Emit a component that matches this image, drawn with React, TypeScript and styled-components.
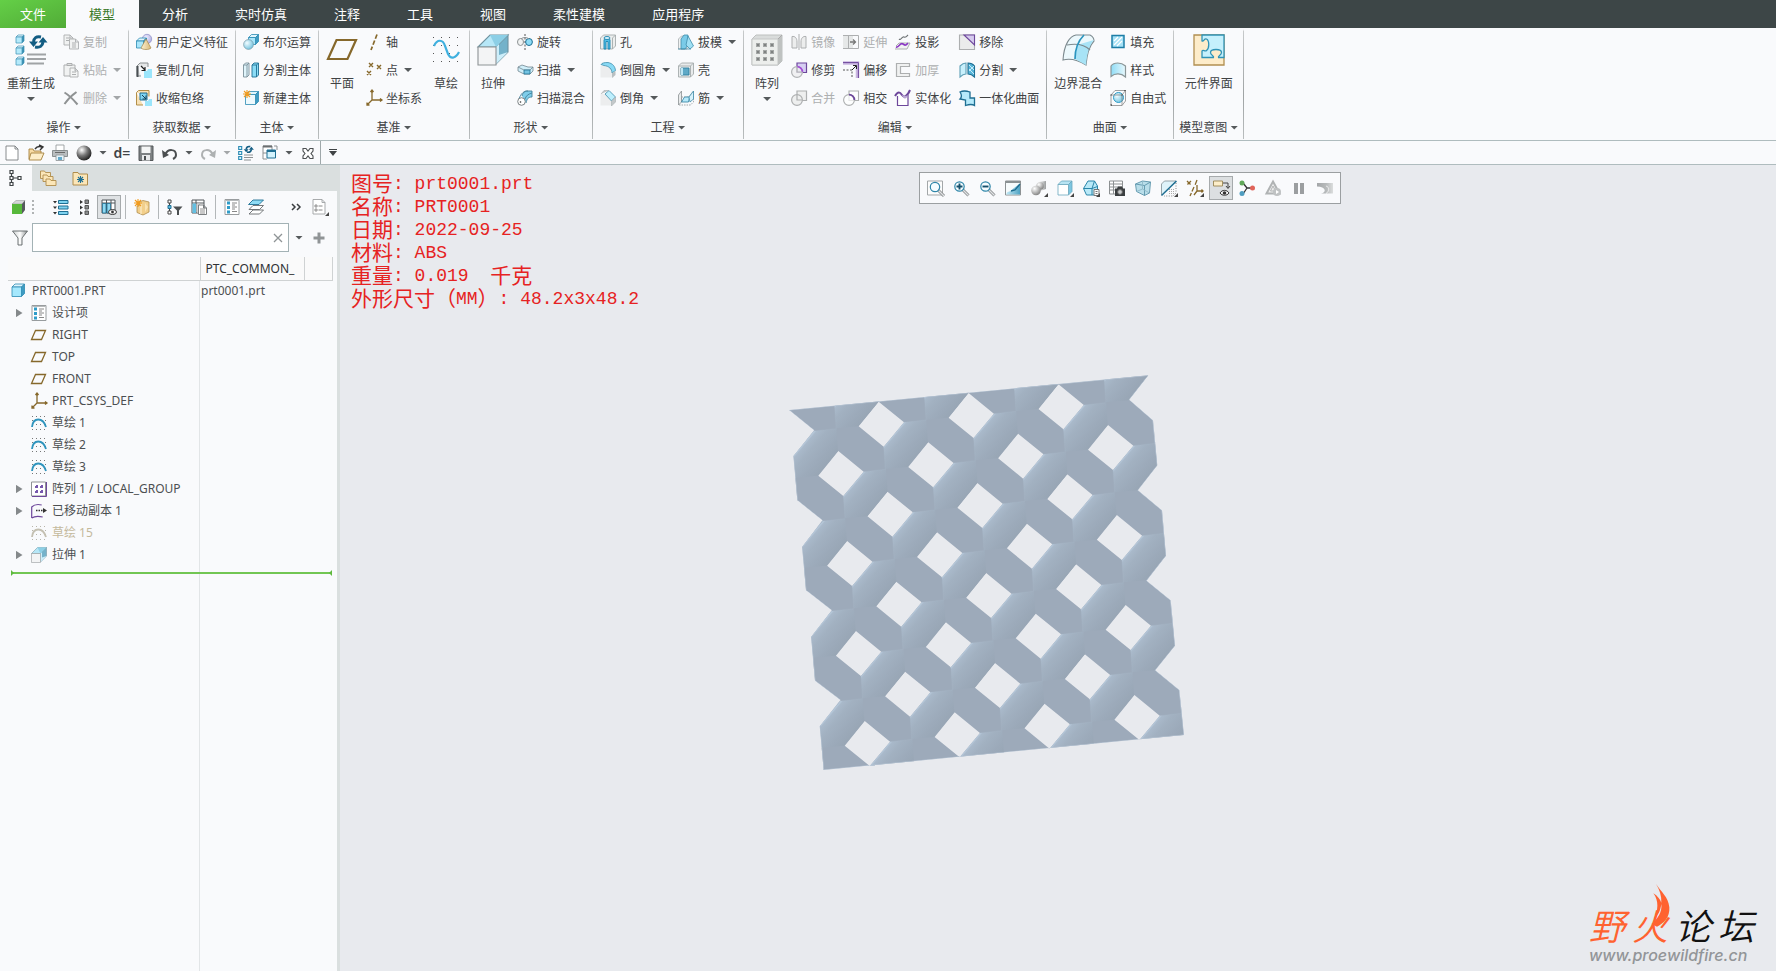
import React from "react";
import styled, { createGlobalStyle, css } from "styled-components";

const ui = `"Noto Sans", "Noto Sans CJK SC", sans-serif`;

const c = {
  bar: "#3d4647",
  surface: "#f9fafc",
  canvas: "#e8eaee",
  line: "#afbcbe",
  text: "#404244",
  off: "#adafb0",
};

const Global = createGlobalStyle`
  *, *::before, *::after { box-sizing: border-box; }
  body { margin: 0; background: ${c.canvas}; color: ${c.text}; font: 12px/16px ${ui}; }
  button, input { font: inherit; color: inherit; }
  button { border: 0; padding: 0; background: none; cursor: pointer; }
  button:disabled { cursor: default; }
`;

/* ---------- icon drawings ---------- */

const B = "#1f6f93";
const G = "#8d9294";
const BR = "#86682b";
const P = "#6d479b";
const MID = "#74c3e2";

const box = (x: number, y: number, w: number, d: number, front = "#a9e6fb", stroke = "#2b8ab3", side = "#3f9cc2", top = "#dff5fd") => (
  <g stroke={stroke} strokeWidth=".8" strokeLinejoin="round">
    <path d={`M${x} ${y + d}l${d} ${-d}h${w}l${-d} ${d}z`} fill={top} />
    <path d={`M${x + w} ${y + d}l${d} ${-d}v${w}l${-d} ${d}z`} fill={side} />
    <path d={`M${x} ${y + d}h${w}v${w}h${-w}z`} fill={front} />
  </g>
);
const sheet = (x: number, y: number, w: number, h: number, s = G, f = "#fff") => (
  <path d={`M${x} ${y}h${w - 3}l3 3v${h - 3}h${-w}zM${x + w - 3} ${y}v3h3`} fill={f} stroke={s} strokeWidth=".9" />
);
const dots = (xs: number[], ys: number[], s: number, f: string) =>
  xs.map((x) => ys.map((y) => <rect key={`${x}-${y}`} x={x} y={y} width={s} height={s} fill={f} />));
const cycle = (f: string) => (
  <g fill="none" stroke={f} strokeWidth="3">
    <path d="M26 3c-5-1-7 1-7.500 5" />
    <path d="M20 13c5 1 7.500-1 8-5" />
    <path d="M14 7.500h9l-4.500 5.500zM23.500 8.500h9L28 3z" fill={f} stroke="none" />
  </g>
);
const star = (x: number, y: number) => (
  <path d={`M${x} ${y - 4}v8M${x - 4} ${y}h8M${x - 3} ${y - 3}l6 6M${x + 3} ${y - 3}l-6 6`} stroke="#f29b1d" strokeWidth="1.1" />
);
const magnifier = (x: number, y: number, inner?: React.ReactNode) => (
  <>
    <path d={`M${x + 3} ${y + 3}l6 6`} stroke="#8b8f91" strokeWidth="3" />
    <path d={`M${x + 3} ${y + 3}l6 6`} stroke="#e1e3e4" strokeWidth="1.2" />
    <circle cx={x} cy={y} r="4.7" fill="#f5fcff" stroke="#2f86a9" strokeWidth="1.2" />
    {inner}
  </>
);
const corner = <path d="M17 13v4h-4z" fill="#444" stroke="none" />;
const sketchArc = (s: string, d: string) => (
  <>
    {dots([1, 5, 9, 13], [1, 14], 1, d)}
    {dots([1, 14], [5, 9], 1, d)}
    {dots([5, 9], [9], 1, d)}
    <path d="M1 12C2 2 12 2 15 12" fill="none" stroke={s} strokeWidth="1.8" />
  </>
);
const miniCubes = (ys: number[]) => ys.map((y) => <g key={y}>{box(1, y, 6, 2, "#b5eafb", "#4b9dbd", "#2b86ab", "#eefaff")}</g>);

const icons: Record<string, React.ReactNode> = {
  copy: <g>{sheet(1, 1, 9, 10, c.off, "#f1f2f2")}{sheet(6.5, 5, 9, 10, c.off, "#f1f2f2")}<path d="M3 4h4M3 6.500h3M9 9h4M9 11h4M9 13h4" stroke={c.off} /></g>,
  paste: <g stroke={c.off}><path d="M1 3h11v11H1z" fill="#f1f2f2" /><path d="M4 3.500V1.500h5v2z" fill="#e2e3e3" />{sheet(7, 6, 8, 9, c.off, "#f4f5f5")}<path d="M9 10h4M9 12.500h4" /></g>,
  del: <path d="M1.500 2.500c5 3 8 6 13 12M13.500 2C9 5 5 9 1.500 14" fill="none" stroke="#8f9293" strokeWidth="2" />,
  udf: <g><circle cx="11" cy="5" r="4.700" fill="url(#violet)" stroke="#8c8cc4" strokeWidth=".7" />{box(0.500, 4, 7, 3)}<path d="M10 5l5 9c-2 2-8 2-10 0z" fill="url(#tan)" stroke="#a5874a" strokeWidth=".7" /></g>,
  copyGeom: <g><path d="M1 4l3-3h8v4M1 4v10h4" fill="#e4e6e7" stroke="#8b9092" /><path d="M.5 4v11h2V4z" fill="#4b5054" /><path d="M5 4l4 4M9 5v3.500H5.500" stroke="#222" fill="none" strokeWidth="1.200" /><path d="M8 9h3l1-2h4v9H8z" fill="#9be5fb" /></g>,
  shrink: <g><path d="M.5 2.500l2-2H13v6M.5 2.500V15H7" fill="#f7e1b6" stroke="#b38e48" /><path d="M4 3h7v7H4z" fill="#7fd5f3" stroke={B} /><path d="M6 5l4 4M10 5.500V9H6.500" stroke="#173f52" fill="none" /><path d="M9 11h3l1-2h3v7H9z" fill="#9be5fb" /></g>,
  bool: <g>{box(5.500, 0.500, 7, 3)}<circle cx="5.500" cy="10.500" r="4.900" fill="url(#sphereBlue)" stroke="#7b9aa6" strokeWidth=".7" /></g>,
  splitBody: <g strokeWidth=".9"><path d="M.5 3l2-2H6v12l-2 2H.5z" fill="#dff4fb" stroke="#7a8f98" /><path d="M.5 3H4v12M4 3l2-2" fill="none" stroke="#7a8f98" /><path d="M9 3l2-2h4.500v12l-2 2H9z" fill="#8bdcf6" stroke={B} /><path d="M9 3h4.500v12M13.500 3l2-2" fill="none" stroke={B} /></g>,
  newBody: <g>{box(2.500, 1.500, 10, 3, "#eef9fd")}{star(4, 4)}</g>,
  axis: <path d="M11 .500L5 16" stroke={BR} strokeWidth="1.700" strokeDasharray="4.500 2" />,
  points: <path d="M3 1l4 4M7 1L3 5M11 3l4 4M15 3l-4 4M1 9l4 4M5 9l-4 4" stroke={BR} strokeWidth="1.400" />,
  csys: <path d="M6 0v10h10M6 10l-5 5M4.500 2L6 0l1.500 2M14 8.500l2 1.500-2 1.500M1 12.500V15h2.500" fill="none" stroke={BR} strokeWidth="1.300" />,
  revolve: <g><path d="M8 0v16" stroke="#555" strokeDasharray="2 1.500" /><ellipse cx="3.500" cy="8" rx="3" ry="3.500" fill="#f0f2f2" stroke={G} /><ellipse cx="12" cy="8" rx="3.400" ry="3.500" fill="#8edcf6" stroke={B} /><path d="M4 5c2-2 6-2 8 0" fill="none" stroke={G} /></g>,
  sweep: <g strokeWidth=".8"><path d="M1 5l4-2 6 2h5v4l-3 3H7L1 9z" fill="#cfeef9" stroke="#738790" /><path d="M1 5l6 3h6l3-3" fill="none" stroke="#738790" /><path d="M7 8h6v4H7z" fill={MID} stroke={B} /></g>,
  blend: <g strokeWidth=".9"><path d="M5 6c1-4 3-5 5-5h5v6c-4 0-5 2-6 6" fill="#7ecdea" stroke="#43819b" /><path d="M2 9c2-6 5-8 9-8M8 9c1-3 3-5 7-6" fill="none" stroke="#43819b" /><circle cx="4.500" cy="11.500" r="3.800" fill="#fff" stroke="#6e7577" /><circle cx="3.500" cy="12" r=".8" fill="#333" /></g>,
  hole: <g strokeWidth=".9"><path d="M.5 4l3-3h12v11l-3 3H.5z" fill="#eceeee" stroke="#a5abad" /><path d="M12.500 4v11M12.500 4l3-3" stroke="#a5abad" /><path d="M4 15V6c0-2 6-2 6 0v9H8V7.500H6V15z" fill="#52bfe8" stroke="#1882ae" /><ellipse cx="7" cy="4" rx="3" ry="1.500" fill="#d8f4fe" stroke="#1882ae" /></g>,
  round: <g><path d="M.5 4h8l5 5v6.500H.5z" fill="#ecedee" /><path d="M1 2.500C2 1 4 .500 8 .500c5 1 7 4 7.500 8L12 11C12 7 9 4 4 3.500z" fill="#89daf5" stroke="#3f8dab" strokeWidth=".8" /><path d="M12 11l3.500-2v4L12 16z" fill="#b9bfc1" /></g>,
  chamfer: <g><path d="M.5 4h5l6 7v4.500H.5z" fill="#ecedee" /><path d="M5 4l4-3.500 6.500 6.500-4 4z" fill="#bdeffd" stroke="#3f8dab" strokeWidth=".8" /><path d="M1 4L4 .500h5M11.500 16v-5l4-4v5z" fill="#c3c8ca" stroke="#a5abad" strokeWidth=".6" /></g>,
  draft: <g strokeWidth=".8"><path d="M.5 5l3-3h5L9 15H.5z" fill="#f0f2f2" stroke="#a5abad" /><path d="M3 5l3-4h4v10l-3 4H3z" fill="#7acbe8" stroke="#3f8dab" /><path d="M10 2l5.500 10L12 15 8 11z" fill="#9fe0f5" stroke="#3f8dab" /><path d="M0 15h13" stroke="#3f8dab" /></g>,
  shell: <g strokeWidth=".9"><path d="M.5 4l3-3h12v11l-3 3H.5z" fill="#e9ebec" stroke="#a5abad" /><path d="M12.500 4v11M.5 4h12l3-3" fill="none" stroke="#a5abad" /><path d="M3 6h8v7H3z" fill="#5fa9c7" stroke="#2f7f9f" /><path d="M3 6h2v7H3z" fill="#bfe7f5" /></g>,
  rib: <g strokeWidth=".8"><path d="M.5 5l3-4v11l-3 3z" fill="#e9ebec" stroke="#8b9193" /><path d="M3.500 12V7h7l5-6v11l-3 3H1" fill="none" stroke="#8b9193" strokeDasharray="1.500 1" /><path d="M3.500 12l3-5h5l-1 5z" fill="#b7eafb" stroke="#2f7f9f" /><path d="M11 7l4.500-6v8L12 12z" fill="#d8f2fb" stroke="#3f8dab" /></g>,
  mirror: <g fill="#eceded" stroke={c.off}><path d="M1 2.500C4 2 6 4 6 8v6H1zM15 2.500c-3-.500-5 1.500-5 5.500v6h5z" /><path d="M8 0v16" /></g>,
  trim: <g strokeWidth="1.200"><path d="M6 1h9.500v9.500H6z" fill="#d6cff2" stroke={P} /><circle cx="6" cy="10" r="5.400" fill="#eeeeef" fillOpacity=".8" stroke="#b0b2b4" /><path d="M6 4.600A5.400 5.400 0 0 1 11.400 10" fill="none" stroke="#a34bd8" strokeWidth="1.700" /><path d="M6 4.600V10h5.400" fill="none" stroke="#b0b2b4" /></g>,
  merge: <g stroke={c.off} strokeWidth="1.200" fill="#eeefef"><path d="M6 1h9.500v9.500H6z" /><circle cx="6" cy="10" r="5.400" /><path d="M6 5v5h5" fill="none" /></g>,
  extend: <g stroke={c.off}><path d="M0 1.500h10v13H0z" fill="#e6e8e8" stroke="none" /><path d="M0 1.500h15.500v13H0M5.500 1.500v13" fill="none" /><path d="M7 8h5M10 5.500L12.500 8 10 10.500" fill="none" stroke="#777" strokeWidth="1.300" /></g>,
  offset: <g><path d="M0 1h14.500v15" fill="none" stroke="#c9b6e0" strokeWidth="3.500" /><path d="M0 .600h15.400V16" fill="none" stroke={P} /><path d="M0 8h9v8" fill="none" stroke="#555" strokeDasharray="2 1.500" /><path d="M9 8l4-4M10 3.500h3.500V7" fill="none" stroke="#222" /></g>,
  intersect: <g strokeWidth="1.100" fill="#fff" fillOpacity=".7"><path d="M6 1h9.500v9.500H6z" stroke={c.off} /><circle cx="6" cy="10" r="5.400" stroke={c.off} /><path d="M6 4.600A5.400 5.400 0 0 1 11.400 10" fill="none" stroke={P} strokeWidth="1.800" /></g>,
  project: <g fill="none"><path d="M4 5c2 2 3-3 5-2s3-1 4-2" stroke="#6d7274" strokeWidth="1.100" /><path d="M1 12l3-3h11l-3 6H0" fill="#f1f2f2" stroke={c.off} /><path d="M1 13c3 1 4-5 7-3s3 1 5-1" stroke="#8a37c4" strokeWidth="1.600" /></g>,
  thicken: <path d="M14.500 1.500H1.500v13h13v-3h-9v-7h9z" fill="#f0f1f1" stroke={c.off} strokeWidth="1.200" />,
  solidify: <g strokeWidth="1.200"><path d="M2.500 6v9.500h10.500V5" fill="#fff" stroke={P} /><path d="M0 6c3-5 5-4 7-1s5 2 8-5" fill="none" stroke={P} strokeWidth="2" /><path d="M3 3c2 0 3 1 5 4s4 1 5-2l-2 1-4-1z" fill="#b9a6d3" /></g>,
  remove: <g strokeWidth="1.100"><path d="M.5 1h15v14.500H.5z" fill="#ebecec" stroke={c.off} /><path d="M5 1h10.500v10z" fill="#d6cbee" stroke={P} /></g>,
  splitSurf: <g strokeWidth="1.100"><path d="M1 4c2-2 3-3 6-3v11c-3 0-4 1-6 3z" fill="#c9f0fc" stroke="#5f9fb6" /><path d="M9 1c3 0 5 1 6.500 3v11c-2-2-4-3-6.500-3z" fill="#57b6da" stroke={B} /><path d="M10 3l5 5M10 7l5 5M15 4l-5 5" stroke="#e5f8ff" strokeWidth=".8" /></g>,
  unify: <path d="M1 2c4-2 7-1 10 0v6h4.500v7.500c-3-2-6-1-9 0V10L1 9c2-2 2-4 0-7z" fill="#b5eafb" stroke={B} strokeWidth="1.300" />,
  fill: <g><path d="M2 1.500h12v12H2z" fill="#a5e1f6" stroke="#1d7ea6" strokeWidth="1.500" /><path d="M4 7l4-4M4 11l8-8M7 12l5-5" stroke="#fff" strokeWidth="1.200" /></g>,
  style: <path d="M1 4c3-4 10-4 14.500 0v11C11 11 5 11 1 14.500z" fill="url(#blueDiag)" stroke="#8b9698" strokeWidth="1.200" />,
  freestyle: <g><circle cx="8.500" cy="7.500" r="5" fill="url(#sphereBlue)" stroke="#2e9cc8" /><path d="M1 5h11v10.500H1zM1 5l4-4.500h10.500V11L12 15.500M12 5l3.500-4.500" fill="none" stroke="#888" strokeWidth=".8" /><path d="M.5 4.500h1v1h-1zM11.500 4.500h1v1h-1zM.5 14.500h1.500v1H.5zM14.500 0h1v1h-1z" fill="#222" /></g>,
  // large ribbon drawings
  regen: <g>{miniCubes([1, 12, 23])}{cycle("#135d83")}<path d="M12 20.500h19M12 25h19M12 29.500h17" stroke="#a0a3a5" strokeWidth="1.800" /></g>,
  plane: <path d="M10.500 6H30L21.500 25H2z" fill="none" stroke={BR} strokeWidth="2.200" />,
  sketchBig: <g>{dots([3, 11, 19, 27], [3, 11, 19, 27], 1, "#555")}<path d="M4 12c3-7 9-7 11 0l3 8c3 6 8 4 11-2" fill="none" stroke="#3fb0df" strokeWidth="2.200" /></g>,
  extrudeBig: <g strokeWidth="1.100"><path d="M1 13L13 1h18L19 13z" fill="#b6e7f7" stroke="#6f93a0" /><path d="M19 13L31 1v17L19 30z" fill="#74b2ca" stroke="#6f93a0" /><path d="M19 30V13l3-3v11l9-3z" fill="#cdeefa" /><path d="M13 1h18L19 13z" fill="#8ccfe6" /><path d="M1 13h18v18H1z" fill="#f3f4f5" stroke="#8e9395" /></g>,
  patternBig: <g><path d="M1 5l4-4h26v26l-4 4H1z" fill="#d9dcdb" stroke="#bdc0bf" /><path d="M1 5h26v26H1z" fill="#eceeec" stroke="#c4c7c6" /><path d="M27 5l4-4v26l-4 4z" fill="#bfc2c1" /><path d="M27 5l4-4" stroke="#aaa" />{dots([5, 12, 19], [9, 16, 23], 4, "#a4a7a6")}{dots([6, 13, 20], [10, 17, 24], 2, "#7f8281")}</g>,
  boundary: <g strokeWidth="1.100"><path d="M1 26C2 10 8 2 14 1h14c2 1 4 3 4 6-5 5-7 12-8 24-8-5-15-7-23-5z" fill="#ecf8fc" stroke="#7d8a8f" /><path d="M15 11l17-5c-5 6-7 13-8 25l-11-6z" fill="#a8e3f6" /><path d="M5 11c10-2 18 0 23 5" fill="none" stroke="#7d8a8f" /><path d="M22 1c-7 7-9 14-9 24" fill="none" stroke="#2a95bf" strokeWidth="1.700" /></g>,
  puzzle: <g strokeWidth="1.300"><path d="M1 1h30v30H1z" fill="#fdecca" stroke="#b18f50" /><path d="M9 1h22v22.500h-5.500c-1-2 3-2 3-5 0-4-11-4-11 0 0 3 4 3 3 5H9V17c1-2 3 1 4.500-.500 3-2 3-10 0-11.500C11 4 11 8 9 7z" fill="#c5f0fc" stroke="#2f93b7" /></g>,
  // quick access
  newFile: <g transform="translate(1 0)">{sheet(1, 1, 12, 14, "#7b8082")}</g>,
  open: <g strokeWidth=".9"><path d="M1 14V4h4l1 2h7v8z" fill="#f7dba3" stroke="#a5823f" /><path d="M3 8h13l-3 7H1z" fill="#fdeec9" stroke="#a5823f" /><path d="M7 4c2-3 4-3 7-2M11 0l4 2-3 3" fill="none" stroke="#333" strokeWidth="1.400" /></g>,
  print: <g strokeWidth=".8"><path d="M4 0h8v6H4z" fill="#fff" stroke={G} /><path d="M.5 5.500h15v6H.5z" fill="#b9bdbf" stroke="#777c7e" /><path d="M3 7.500h10" stroke="#555" /><path d="M4 10h8v5.500H4z" fill="#e5f3f9" stroke={G} /><path d="M6 12h4v3H6z" fill="#63a9ca" /></g>,
  ball: <circle cx="8" cy="8" r="7.500" fill="url(#ball)" />,
  save: <g><path d="M1 1h14v14.500H1z" fill="#7d8183" stroke="#55595b" /><path d="M3.500 1.500h9V8h-9z" fill="#f4f5f5" /><path d="M4 10h8v5.500H4z" fill="#e9ebec" /><path d="M6 11h2v4H6z" fill="#4b4f51" /></g>,
  undo: <g><path d="M3 10c3-7 11-6 11 0 0 2-1 3-3 4" fill="none" stroke="#4b4f51" strokeWidth="2" /><path d="M0 5l1 8 6-3z" fill="#4b4f51" /></g>,
  redo: <g><path d="M13 10C10 3 2 4 2 10c0 2 1 3 3 4" fill="none" stroke="#aeb1b2" strokeWidth="2" /><path d="M16 5l-1 8-6-3z" fill="#aeb1b2" /></g>,
  regenSmall: <g><path d="M.7 1.500h3v3h-3zM.7 6.500h3v3h-3zM.7 11.500h3v3h-3z" fill="#d8f3fc" stroke="#2b8ab3" strokeWidth="1.100" /><g transform="translate(-2 0) scale(.55)">{cycle("#135d83")}</g><path d="M6 10h9M6 12.500h9M6 15h7" stroke="#8c9092" /></g>,
  windows: <g><path d="M1 1h9v7H1zM1 8v6h4" fill="#fff" stroke="#8c9092" /><path d="M1 1.500h9" stroke="#6a6e70" strokeWidth="2" /><path d="M5 5h8.500v8H5z" fill="#d3f2fc" stroke={B} /><path d="M5 6h8.500" stroke={B} strokeWidth="2" /><path d="M12 1h3v4" fill="none" stroke="#8c9092" /></g>,
  closeWin: <path d="M3 3.500h3l2 2.500 2-2.500h3v2.500L11 8.500l2 2.500v2.500h-3L8 11l-2 2.500H3V11l2-2.500L3 6z" fill="#fff" stroke="#4b4f51" strokeWidth="1.100" />,
  // side panel
  modelTree: <path d="M2 .500h3v3H2zM2 6.500h3v3H2zM2 12.500h3v3H2zM10 6.500h3v3h-3zM3.500 3.500v3M3.500 9.500v3M5 8h5" fill="#fff" stroke="#3f4446" strokeWidth="1.200" />,
  folders: <g fill="#fbe6b8" stroke="#b08d4c" strokeWidth=".9"><path d="M.5 1h4l1 1.500h5v6H.5z" /><path d="M3 5h4l1 1.500h5v5H3z" /><path d="M6 9h4l1 1.500h5v5H6z" /></g>,
  favorites: <g><path d="M1 2.500h5L7 4h8.500v11H1z" fill="#fbe6b8" stroke="#b08d4c" /><path d="M8.500 6v7M5 9.500h7M6 7l5 5M11 7l-5 5" stroke={B} strokeWidth="1.100" /></g>,
  greenCube: <g><path d="M2 5l4-3.500h9L12 5z" fill="#d5d7d8" stroke="#9a9d9e" strokeWidth=".6" /><path d="M12 5l3-3.500V11l-3 4z" fill="#555a5c" /><path d="M2 5h10v10H2z" fill="#57b83b" /></g>,
  expand: <g><path d="M5.500 1.500h9.500v3H5.500zM5.500 7h9.500v3H5.500zM5.500 12.500h9.500v3H5.500z" fill="#7ed2ef" stroke={B} /><path d="M0 2h4L2 4.500zM0 7.500h4L2 10zM0 13h4l-2 2.500z" fill="#333" /></g>,
  collapse: <g><path d="M8 1h3.500v3.500H8zM8 6.500h3.500V10H8zM8 12h3.500v3.500H8z" fill="#8a8d8e" stroke="#555" /><path d="M3 1l3 2-3 2zM3 6.500l3 2-3 2zM3 12l3 2-3 2z" fill="#333" /></g>,
  columns: <g><path d="M1 1h13v13H1zM1 4h13M5.500 1v13M10 1v13" fill="#fff" stroke="#51565a" /><path d="M1.500 4.500H5V14H1.500zM6 4.500h3.500V14H6z" fill="#8fd9f2" stroke={B} strokeWidth=".8" /><ellipse cx="11.500" cy="13" rx="4" ry="2.500" fill="#fff" stroke="#333" /><circle cx="11.500" cy="13" r="1.400" fill="#333" /></g>,
  newGroup: <g><path d="M5 3l4-1.500L15 3v10l-6 3-6-2.500V7l3-1z" fill="#f2cf8b" stroke="#b08d4c" strokeWidth=".8" /><path d="M7 5v10" stroke="#fff3d5" /><path d="M11 4l3 4-3 5z" fill="#fae3b3" />{star(4, 4)}</g>,
  treeFilter: <g><path d="M1 1h3v3H1zM1 12h3v3H1zM2.500 4v8" fill="#fff" stroke="#444" /><path d="M1 6.500h3v3H1z" fill="#5cbbe0" stroke={B} /><path d="M6 7.500h9.500l-3.500 4V16h-2v-4.500z" fill="#4b4f51" /></g>,
  treeSheet: <g><path d="M1 1h12v13H1zM1 4h12M5 1v13" fill="#fff" stroke="#51565a" /><path d="M1.500 4.500H5V14H1.500z" fill="#63bfe1" /><path d="M6 4.500h3v9H6z" fill="#d0d3d4" />{sheet(7.500, 6, 8, 9.500, "#6d7274")}<path d="M9 10h5M9 12h5M9 14h5" stroke="#777" strokeWidth=".8" /></g>,
  list: <g><path d="M1 .500h14v15H1z" fill="#fff" stroke="#989c9e" /><path d="M1.500 1.500h13" stroke="#b7babb" />{dots([3], [2.500, 7, 11.500], 3, "#2f9cc8")}<path d="M8 4h5M8 6h3M8 8h5M8 10h3M8 12.500h5" stroke="#888" /></g>,
  layers: <g strokeWidth=".9" strokeLinejoin="round"><path d="M1 15l4-4h10.500l-4 4zM1 10.500l4-4h10.500l-4 4z" fill="#fff" stroke="#666b6d" /><path d="M.5 5.500L5 1h10.500L11 5.500z" fill="#8fdcf5" stroke={B} /></g>,
  more: <path d="M4 5l3 3-3 3M9 5l3 3-3 3" fill="none" stroke="#3b3f41" strokeWidth="1.500" />,
  settings: <g>{sheet(1, 0.500, 12, 14.500, "#9ea2a4")}<path d="M3 6h2v2H3zM3 10h2v2H3z" fill="none" stroke="#777" strokeWidth=".8" /><path d="M6.500 7h4M6.500 11h4" stroke="#888" />{corner}</g>,
  funnel: <path d="M.5 1h15L10 8v7H6V8z" fill="url(#funnelFill)" stroke="#5f6466" strokeWidth=".9" />,
  plus: <path d="M8 2.500v11M2.500 8h11" stroke="#909496" strokeWidth="3" />,
  partCube: <g>{box(1, 1, 9.500, 3, "#a5e8fd")}</g>,
  planeSmall: <path d="M4.500 3.500h10l-4 9H.5z" fill="none" stroke={BR} strokeWidth="1.300" />,
  sketch: sketchArc("#2f94bd", "#777"),
  sketchOff: sketchArc("#c4c0b2", "#b8b5aa"),
  pattern: <g><path d="M.5 1h14v14H.5z" fill="#fff" stroke="#8f9295" /><path d="M15.500 1v14.500H1" stroke={P} fill="none" />{dots([4, 9], [4, 9], 3, "#7658ad")}{dots([4, 9], [4, 9], 1, "#fff")}</g>,
  moved: <g><path d="M.7 15V4c3-3 6-3 10-2M.7 15c3-2 7-2 11-1" fill="none" stroke={P} strokeWidth="1.200" /><path d="M5 7.500h7" stroke="#333" strokeWidth="1.300" strokeDasharray="1.500 1" /><path d="M12 5l4 2.500-4 2.500z" fill="#333" /></g>,
  // view toolbar
  zoomFit: <g><path d="M.5 1h15v14H.5z" fill="#fcfcfc" stroke="#a3a7a9" />{magnifier(8, 7)}</g>,
  zoomIn: magnifier(6.500, 6.500, <path d="M3.500 6.500h6M6.500 3.500v6" stroke="#15506c" strokeWidth="1.900" />),
  zoomOut: magnifier(6.500, 6.500, <path d="M3.500 6.500h6" stroke="#15506c" strokeWidth="1.900" />),
  repaint: <g><path d="M.5 1h15v14H.5z" fill="#f7fbfc" stroke="#8d9294" /><path d="M1 14.500c2-5 3-1 6-5l8-6v11z" fill="url(#blueRow)" /><path d="M6 11l4-1 5-6" stroke="#1b6b8e" strokeWidth="1.300" fill="none" /><path d="M1 2h14" stroke="#8b9193" strokeWidth="2" /></g>,
  shading: <g><path d="M7 2l8-1v8l-6 2z" fill="url(#greyRow)" /><circle cx="9" cy="6" r="3.800" fill="url(#greyBall)" /><circle cx="5" cy="10.500" r="4.800" fill="url(#greyBall)" />{corner}</g>,
  viewBox: <g>{box(1, 1, 10.500, 3.500, "#fff", "#6aa7be", "#7cc6e1", "#b8e4f3")}{corner}</g>,
  namedViews: <g strokeWidth="1"><path d="M.5 8.500L5 1h6.500l3 5v6L11 15H3.500z" fill="#b9e9f8" stroke="#2b86aa" /><path d="M.5 8.500H9l5.500-2M9 8.500L11.500 1M9 8.500V15" fill="none" stroke="#2b86aa" /><path d="M11 9.500h5v6h-5z" fill="#fff" stroke="#777" /><path d="M12.500 11.500h2M12.500 13.500h2" stroke="#777" />{corner}</g>,
  camera: <g><path d="M.5 1h13v13H.5zM.5 4h13M.5 7h13M.5 10h8M4.500 1v13" fill="#fff" stroke="#8c9092" /><path d="M6 8.500h2l1-2h4l1 2h2V16H6z" fill="#3b3f41" /><circle cx="11" cy="12" r="2.400" fill="#c9cccd" stroke="#666" /></g>,
  perspective: <g strokeWidth=".9" stroke="#5b94aa"><path d="M.5 4l7-3 8 1-1 11-5 2.500-8-4z" fill="#b9deea" /><path d="M.5 4l9 1.500v10M9.500 5.500L15.500 2" fill="none" /><path d="M7.500 1v8l-6 2.500M7.500 9l7 4" fill="none" stroke="#8fb9c8" /></g>,
  section: <g><path d="M.5 4l3-3H15L1 15H.5z" fill="#dff3fa" stroke="#8c9a9f" strokeWidth=".9" /><path d="M15 3v10l-3 3H3" fill="none" stroke="#888" strokeDasharray="1 1.500" />{dots([8, 10, 12], [9, 11, 13], 1, "#aaa")}<path d="M.5 15.500L15.500 1" stroke="#1f6f93" strokeWidth="1.500" />{corner}</g>,
  datums: <g stroke={BR} strokeWidth="1.300" fill="none"><path d="M0 1l4 4M4 1L0 5M10 0L8 5M7 7L3 16" strokeDasharray="5 1.500" /><path d="M10 5v6h6M10 11l-3 4M14.500 9.500L16 11l-1.500 1.500" />{corner}</g>,
  annotate: <g><path d="M.5 1h9v5h-9z" fill="#fdeec9" stroke="#9a8653" strokeWidth=".9" /><path d="M10 3h5v5M13 6l2 2.500L17 6" fill="none" stroke="#444" /><path d="M7 13c2-3.500 7-3.500 9 0-2 3-7 3-9 0z" fill="#fff" stroke="#333" /><circle cx="11.500" cy="13" r="1.800" fill="#333" /></g>,
  spin: <g><path d="M4 3l4 5M8 8h6M8 8l-4 6" stroke="#333" strokeWidth="1.300" /><circle cx="3" cy="3" r="2.500" fill="#61a85a" /><circle cx="3" cy="13.500" r="2.500" fill="#4f9dc0" /><circle cx="13.500" cy="8" r="2.500" fill="#e0645a" /></g>,
  simOff: <g><path d="M8 1.500l6.500 12H1.500z" fill="#eee" stroke="#b0b3b4" strokeWidth="2" /><path d="M8 6l2.500 5h-5z" fill="none" stroke="#b0b3b4" /><circle cx="12" cy="12" r="4" fill="#bfc2c3" /><path d="M11 10l3 2-3 2z" fill="#fff" /></g>,
  pause: <path d="M3 3h4v11H3zM9 3h4v11H9z" fill="#9b9ea0" />,
  flow: <g><path d="M0 3h16v10.500H4c6-1 5-7-4-7z" fill="url(#flowFill)" /><path d="M9 6c4 1 3 6 0 7.500" fill="none" stroke="#fff" opacity=".7" /></g>,
};

icons.extrude = <g transform="scale(.5)">{icons.extrudeBig}</g>;

const Svg = styled.svg`
  display: block;
  flex: none;
  overflow: visible;
`;

const Icon = ({ name, size = 16 }: { name: string; size?: number }) => (
  <Svg width={size} height={size} viewBox={`0 0 ${size} ${size}`} aria-hidden="true">
    {icons[name]}
  </Svg>
);

const Gradients = () => (
  <Defs width="0" height="0" aria-hidden="true">
    <defs>
      <radialGradient id="ball" cx=".35" cy=".3" r=".75"><stop offset="0" stopColor="#fff" /><stop offset=".5" stopColor="#777" /><stop offset="1" stopColor="#1c1c1c" /></radialGradient>
      <radialGradient id="greyBall" cx=".35" cy=".3" r=".8"><stop offset="0" stopColor="#fff" /><stop offset="1" stopColor="#777" /></radialGradient>
      <radialGradient id="sphereBlue" cx=".35" cy=".35" r=".75"><stop offset="0" stopColor="#f2fcff" /><stop offset="1" stopColor="#69bfdd" /></radialGradient>
      <radialGradient id="violet" cx=".4" cy=".35" r=".75"><stop offset="0" stopColor="#f0f0ff" /><stop offset="1" stopColor="#a3a3de" /></radialGradient>
      <linearGradient id="tan"><stop offset="0" stopColor="#fdf2d4" /><stop offset="1" stopColor="#d9b877" /></linearGradient>
      <linearGradient id="greyRow"><stop offset="0" stopColor="#fff" /><stop offset="1" stopColor="#9b9e9f" /></linearGradient>
      <linearGradient id="flowFill"><stop offset="0" stopColor="#a3a6a8" /><stop offset=".6" stopColor="#b8bbbc" /><stop offset="1" stopColor="#dcdede" /></linearGradient>
      <linearGradient id="funnelFill" x1="0" y1="0" x2="1" y2="0"><stop offset="0" stopColor="#c9cccd" /><stop offset=".5" stopColor="#fff" /><stop offset="1" stopColor="#8d9192" /></linearGradient>
      <linearGradient id="blueRow"><stop offset="0" stopColor="#c5ebf7" /><stop offset="1" stopColor="#4fa3c4" /></linearGradient>
      <linearGradient id="blueDiag"><stop offset="0" stopColor="#8fdcf6" /><stop offset="1" stopColor="#e8f8fd" /></linearGradient>
    </defs>
  </Defs>
);

const Defs = styled.svg`
  position: absolute;
`;

/* ---------- layout ---------- */

const Page = styled.div`
  display: flex;
  flex-direction: column;
  min-height: 100vh;
`;

const Tabs = styled.nav`
  display: flex;
  height: 28px;
  background: ${c.bar};
  color: #fff;
  font-size: 13px;
`;

const FileTab = styled.button`
  padding: 0 20px 1px;
  background: linear-gradient(160deg, #64cf47, #51ab37);
`;

const Tab = styled.button<{ $on?: boolean }>`
  padding: 0 24px 1px 23px;
  white-space: nowrap;
  ${(p) => p.$on && css`
    background: ${c.surface};
    color: #3c7a2a;
  `}
`;

const Ribbon = styled.div`
  display: flex;
  height: 112px;
  background: ${c.surface};
`;

const Group = styled.section`
  display: grid;
  grid-template-rows: 84px 28px;
  padding: 0 3px;
  border-right: 1px solid;
  border-image: linear-gradient(transparent 2%, #c6c9ca 4%, #9fa3a4 60%, #b9bdbe 98%, transparent 98%) 1;
`;

const GroupBody = styled.div`
  display: flex;
  justify-content: center;
  gap: 8px;
  padding: 0 4px;
`;

const GroupLabel = styled.button`
  display: flex;
  align-items: center;
  justify-content: center;
  padding: 3px 2px 0;
  white-space: nowrap;
`;

const Column = styled.div`
  display: grid;
  grid-template-rows: repeat(3, 28px);
  justify-items: start;
`;

const Tool = styled.button`
  display: flex;
  align-items: center;
  white-space: nowrap;
  &:disabled { color: ${c.off}; }
`;

const ToolText = styled.span`
  margin-left: 4px;
  padding-top: 2px;
`;

const BigTool = styled.button`
  display: flex;
  flex-direction: column;
  align-items: center;
  min-width: 32px;
  padding-top: 6px;
  white-space: nowrap;
`;

const BigText = styled.span`
  margin: 10px 0 5px;
`;

const Caret = styled.i<{ $off?: boolean; $flush?: boolean }>`
  flex: none;
  width: 8px;
  height: 4px;
  margin-left: ${(p) => (p.$flush ? 0 : 6)}px;
  background: ${(p) => (p.$off ? "#a3a6a8" : "#55595b")};
  clip-path: polygon(0 0, 100% 0, 50% 100%);
`;

const LabelCaret = styled(Caret)`
  margin-left: 3px;
`;

const QuickBar = styled.div`
  display: flex;
  align-items: center;
  height: 25px;
  border: solid ${c.line};
  border-width: 1px 0;
  background: ${c.surface};
`;

const QuickButton = styled.button<{ $narrow?: boolean }>`
  display: grid;
  place-items: center;
  width: ${(p) => (p.$narrow ? 14 : 24)}px;
  height: 23px;
`;

const QuickText = styled.span`
  font-size: 14px;
  font-weight: 600;
`;

const QuickEnd = styled.div`
  display: flex;
  align-items: center;
  height: 23px;
  padding-left: 5px;
  border-left: 1px solid #9fa8aa;
`;

const Work = styled.div`
  display: flex;
  flex: 1;
`;

const Side = styled.aside`
  display: flex;
  flex-direction: column;
  width: 340px;
  border-right: 3px solid #dadfdf;
  background: ${c.surface};
`;

const SideTabs = styled.div`
  display: flex;
  height: 26px;
  background: #dadfdf;
`;

const SideTab = styled.button<{ $on?: boolean }>`
  display: grid;
  place-items: center;
  width: 32px;
  background: ${(p) => (p.$on ? c.surface : "none")};
`;

const SideTools = styled.div`
  display: flex;
  align-items: center;
  height: 32px;
  padding: 0 5px 0 6px;
`;

const SideTool = styled.button<{ $on?: boolean }>`
  display: grid;
  place-items: center;
  width: 24px;
  height: 24px;
  ${(p) => p.$on && css`
    border: 1px solid #a6aaac;
    background: #dfe2e4;
  `}
`;

const Grip = styled.i`
  width: 2px;
  height: 14px;
  margin: 0 15px 0 2px;
  background: repeating-linear-gradient(#b0b3b4 0 2px, transparent 2px 4px);
`;

const Rule = styled.i`
  width: 1px;
  height: 24px;
  margin: 0 4px;
  background: #b3b7b9;
`;

const Spacer = styled.span`
  flex: 1;
`;

const SearchRow = styled.form`
  display: flex;
  align-items: center;
  height: 29px;
  padding: 0 8px 0 12px;
`;

const SearchBox = styled.div`
  display: flex;
  flex: 1;
  height: 29px;
  margin-left: 4px;
  border: 1px solid #a3b2b5;
  background: #fff;
`;

const SearchInput = styled.input`
  flex: 1;
  min-width: 0;
  padding: 0 6px;
  border: 0;
  outline: 0;
  background: none;
`;

const SmallButton = styled.button`
  display: grid;
  place-items: center;
  width: 20px;
`;

const TreeArea = styled.div`
  flex: 1;
  margin-top: 5px;
  background: linear-gradient(#e2e5e7, #e2e5e7) 199px 0 / 1px 100% no-repeat;
`;

const Tree = styled.table`
  width: 324px;
  margin-left: 8px;
  border-collapse: collapse;
  table-layout: fixed;
  color: #4c4f51;
`;

const Head = styled.th<{ $w: number }>`
  width: ${(p) => p.$w}px;
  height: 23px;
  padding: 1px 0 0 5px;
  border: solid #cfd2d3;
  border-width: 0 1px 1px 0;
  background: #fafafa;
  color: #303234;
  font-weight: 400;
  text-align: left;
  overflow: hidden;
`;

const Cell = styled.td`
  height: 22px;
  padding: 0 0 0 1px;
  white-space: nowrap;
`;

const Node = styled.div<{ $root?: boolean; $off?: boolean }>`
  display: flex;
  align-items: center;
  gap: 5px;
  padding-left: ${(p) => (p.$root ? 2 : 3)}px;
  color: ${(p) => (p.$off ? "#c4b99c" : "inherit")};
`;

const Toggle = styled.button`
  display: block;
  width: 14px;
  height: 16px;
  &::before {
    content: "";
    display: block;
    width: 7px;
    height: 9px;
    margin: 0 auto;
    background: ${(p) => (p.disabled ? "none" : "#85898b")};
    clip-path: polygon(0 0, 100% 50%, 0 100%);
  }
`;

const Insert = styled.div`
  display: flex;
  align-items: center;
  justify-content: space-between;
  height: 2px;
  margin: 6px 5px 0 11px;
  background: #72c653;
  &::before, &::after {
    content: "";
    width: 3px;
    height: 6px;
    background: #5fb93e;
    clip-path: polygon(0 0, 100% 50%, 0 100%);
  }
  &::after { clip-path: polygon(100% 0, 0 50%, 100% 100%); }
`;

const Canvas = styled.main`
  position: relative;
  flex: 1;
  background: ${c.canvas};
  overflow: hidden;
`;

const Notes = styled.div`
  padding: 8px 11px;
  color: #e62222;
  font: 18px/23px "Liberation Mono", "Noto Sans CJK SC", monospace;
  white-space: pre;
`;

const Note = styled.p`
  display: flex;
  height: 23px;
  margin: 0;
`;

const Han = styled.span`
  font-family: "Noto Sans CJK SC", sans-serif;
  font-size: 21px;
  line-height: 18px;
`;

const ViewTools = styled.div`
  position: absolute;
  top: 7px;
  left: 579px;
  display: flex;
  align-items: center;
  height: 32px;
  padding: 0 2px;
  border: 1px solid #9b9fa1;
  background: ${c.surface};
`;

const ViewTool = styled.button<{ $on?: boolean }>`
  display: grid;
  place-items: center;
  width: 26px;
  height: 24px;
  ${(p) => p.$on && css`
    width: 24px;
    margin: 0 1px;
    border: 1px solid #a6aaac;
    background: #dcdfe1;
  `}
`;

const PartDrawing = styled.svg`
  position: absolute;
  top: 200px;
  left: 440px;
`;

const Logo = styled.div`
  position: absolute;
  right: 22px;
  bottom: 7px;
  display: flex;
  flex-direction: column;
`;

const LogoName = styled.div`
  display: flex;
  gap: 7px;
  font: italic 350 36px/40px "Noto Sans CJK SC", sans-serif;
  color: #111;
`;

const LogoHot = styled.span`
  color: #ff6230;
`;

const Flame = styled.svg`
  position: absolute;
  top: -20px;
  left: 62px;
`;

const LogoUrl = styled.span`
  margin-top: 2px;
  color: #929598;
  font: italic 500 16px/18px Inter, sans-serif;
`;

/* ---------- ribbon data ---------- */

type Item = { icon: string; text: string; menu?: boolean; off?: boolean };
type Big = { big: string; text: string; menu?: boolean };

const t = (icon: string, text: string, flags = ""): Item => ({ icon, text, menu: flags.includes("m"), off: flags.includes("x") });

const groups: { name: string; parts: (Big | Item[])[] }[] = [
  { name: "操作", parts: [{ big: "regen", text: "重新生成", menu: true }, [t("copy", "复制", "x"), t("paste", "粘贴", "xm"), t("del", "删除", "xm")]] },
  { name: "获取数据", parts: [[t("udf", "用户定义特征"), t("copyGeom", "复制几何"), t("shrink", "收缩包络")]] },
  { name: "主体", parts: [[t("bool", "布尔运算"), t("splitBody", "分割主体"), t("newBody", "新建主体")]] },
  { name: "基准", parts: [{ big: "plane", text: "平面" }, [t("axis", "轴"), t("points", "点", "m"), t("csys", "坐标系")], { big: "sketchBig", text: "草绘" }] },
  { name: "形状", parts: [{ big: "extrudeBig", text: "拉伸" }, [t("revolve", "旋转"), t("sweep", "扫描", "m"), t("blend", "扫描混合")]] },
  { name: "工程", parts: [[t("hole", "孔"), t("round", "倒圆角", "m"), t("chamfer", "倒角", "m")], [t("draft", "拔模", "m"), t("shell", "壳"), t("rib", "筋", "m")]] },
  {
    name: "编辑",
    parts: [
      { big: "patternBig", text: "阵列", menu: true },
      [t("mirror", "镜像", "x"), t("trim", "修剪"), t("merge", "合并", "x")],
      [t("extend", "延伸", "x"), t("offset", "偏移"), t("intersect", "相交")],
      [t("project", "投影"), t("thicken", "加厚", "x"), t("solidify", "实体化")],
      [t("remove", "移除"), t("splitSurf", "分割", "m"), t("unify", "一体化曲面")],
    ],
  },
  { name: "曲面", parts: [{ big: "boundary", text: "边界混合" }, [t("fill", "填充"), t("style", "样式"), t("freestyle", "自由式")]] },
  { name: "模型意图", parts: [{ big: "puzzle", text: "元件界面" }] },
];

const tabs = ["模型", "分析", "实时仿真", "注释", "工具", "视图", "柔性建模", "应用程序"];

const quick: [string, string][] = [
  ["newFile", "新建"], ["open", "打开"], ["print", "打印"], ["ball", "外观"], ["|", "外观菜单"], ["d=", "尺寸"], ["save", "保存"],
  ["undo", "撤消"], ["|", "撤消列表"], ["redo", "重做"], ["|off", "重做列表"], ["regenSmall", "重新生成"], ["windows", "窗口"], ["|", "窗口列表"], ["closeWin", "关闭"],
];

const sideTools: [string, string][] = [
  ["greenCube", "模型"], ["grip", ""], ["expand", "全部展开"], ["collapse", "全部折叠"], ["columns", "显示列"], ["rule", "a"], ["newGroup", "新建组"],
  ["rule", "b"], ["treeFilter", "树过滤器"], ["treeSheet", "树列"], ["rule", "c"], ["list", "设计项"], ["layers", "层"], ["space", ""], ["more", "更多"], ["settings", "设置"],
];

const nodes: { icon: string; text: string; value?: string; kids?: boolean; root?: boolean; off?: boolean }[] = [
  { icon: "partCube", text: "PRT0001.PRT", value: "prt0001.prt", root: true },
  { icon: "list", text: "设计项", kids: true },
  { icon: "planeSmall", text: "RIGHT" },
  { icon: "planeSmall", text: "TOP" },
  { icon: "planeSmall", text: "FRONT" },
  { icon: "csys", text: "PRT_CSYS_DEF" },
  { icon: "sketch", text: "草绘 1" },
  { icon: "sketch", text: "草绘 2" },
  { icon: "sketch", text: "草绘 3" },
  { icon: "pattern", text: "阵列 1 / LOCAL_GROUP", kids: true },
  { icon: "moved", text: "已移动副本 1", kids: true },
  { icon: "sketchOff", text: "草绘 15", off: true },
  { icon: "extrude", text: "拉伸 1", kids: true },
];

const viewTools: [string, string][] = [
  ["zoomFit", "重新调整"], ["zoomIn", "放大"], ["zoomOut", "缩小"], ["repaint", "重画"], ["shading", "显示样式"], ["viewBox", "已保存方向"],
  ["namedViews", "视图管理器"], ["camera", "视图图像"], ["perspective", "透视图"], ["section", "截面"], ["datums", "基准显示"], ["annotate", "注释显示"],
  ["spin", "旋转中心"], ["simOff", "仿真"], ["pause", "暂停"], ["flow", "播放"],
];

const notes: [string, string][][] = [
  [["h", "图号"], ["", ": prt0001.prt"]],
  [["h", "名称"], ["", ": PRT0001"]],
  [["h", "日期"], ["", ": 2022-09-25"]],
  [["h", "材料"], ["", ": ABS"]],
  [["h", "重量"], ["", ": 0.019  "], ["h", "千克"]],
  [["h", "外形尺寸（"], ["", "MM"], ["h", "）"], ["", ": 48.2x3x48.2"]],
];

/* ---------- lattice part ---------- */

const outline =
  "M27 135L1105 31 1048 104 1119 166 1132 301 1074 376 1146 436 1158 572 1100 647 1172 706 1185 842 1126 916 1198 975 1212 1110 131 1215 119 1084 181 1005 105 947 93 816 155 736 78 676 66 546 127 466 52 406 40 273 102 196z";

const span = (a: number, b: number) => Array.from({ length: b - a + 1 }, (_, i) => a + i);
const at = (x: number, y: number, i: number, j: number): [number, number] => [x + i * 269.7 + j * 26.4, y - i * 26 + j * 270];
const wide = span(-2, 5).flatMap((i) => span(-1, 4).flatMap((j) => [at(296, 110, i, j), at(175, 258, i, j)]));
const holes = [
  ...span(0, 2).flatMap((i) => span(0, 3).map((j) => at(296, 110, i, j))),
  ...span(0, 3).flatMap((i) => span(0, 3).map((j) => at(175, 258, i, j))),
];
const holePath = holes.map(([x, y]) => `M${x} ${y}l76 62-61 73-75-61z`).join("");

const Lattice = () => (
  <PartDrawing width="410" height="415" viewBox="0 0 1230 1245" role="img" aria-label="PRT0001">
    <defs>
      <linearGradient id="strut" gradientUnits="userSpaceOnUse" x1="45" y1="98" x2="117" y2="159">
        <stop offset="0" stopColor="#bccfe1" />
        <stop offset=".07" stopColor="#a9b9ca" />
        <stop offset=".3" stopColor="#a2b1c1" />
        <stop offset=".7" stopColor="#9caaba" />
        <stop offset="1" stopColor="#98a6b5" />
      </linearGradient>
      <clipPath id="body"><path d={outline + holePath} clipRule="evenodd" /></clipPath>
    </defs>
    <g clipPath="url(#body)">
      <path d={outline} fill="#9daaba" />
      {wide.map(([x, y]) => (
        <g key={`${x}-${y}`} transform={`translate(${x} ${y})`}>
          <path d="M76 62l67-7 5 67-61 74-67 6-5-67z" fill="url(#strut)" />
          <path d="M76 62l67-7M15 135l5 67" stroke="#a9b8c8" strokeWidth="1.500" opacity=".5" />
        </g>
      ))}
      <path d={outline} fill="none" stroke="#b9c7d6" strokeWidth="3" />
    </g>
  </PartDrawing>
);

/* ---------- page ---------- */

export default function App() {
  return (
    <Page lang="zh-CN">
      <Global />
      <Gradients />
      <Tabs>
        <FileTab>文件</FileTab>
        {tabs.map((name, i) => (
          <Tab key={name} $on={i === 0}>{name}</Tab>
        ))}
      </Tabs>
      <Ribbon>
        {groups.map((g) => (
          <Group key={g.name}>
            <GroupBody>
              {g.parts.map((p, i) =>
                Array.isArray(p) ? (
                  <Column key={i}>
                    {p.map((item) => (
                      <Tool key={item.text} disabled={item.off}>
                        <Icon name={item.icon} />
                        <ToolText>{item.text}</ToolText>
                        {item.menu && <Caret $off={item.off} />}
                      </Tool>
                    ))}
                  </Column>
                ) : (
                  <BigTool key={i}>
                    <Icon name={p.big} size={32} />
                    <BigText>{p.text}</BigText>
                    {p.menu && <Caret $flush />}
                  </BigTool>
                )
              )}
            </GroupBody>
            <GroupLabel>
              {g.name}
              <LabelCaret />
            </GroupLabel>
          </Group>
        ))}
      </Ribbon>
      <QuickBar>
        {quick.map(([icon, label]) => (
          <QuickButton key={label} aria-label={label} $narrow={icon[0] === "|"}>
            {icon[0] === "|" ? <Caret $flush $off={icon === "|off"} /> : icon === "d=" ? <QuickText>d=</QuickText> : <Icon name={icon} />}
          </QuickButton>
        ))}
        <QuickEnd>
          <QuickButton $narrow aria-label="自定义">
            <Svg width="8" height="7" viewBox="0 0 8 7"><path d="M0 0h8v1H0zM0 2h8L4 7z" fill="#3f4345" /></Svg>
          </QuickButton>
        </QuickEnd>
      </QuickBar>
      <Work>
        <Side>
          <SideTabs>
            <SideTab $on aria-label="模型树"><Icon name="modelTree" /></SideTab>
            <SideTab aria-label="文件夹浏览器"><Icon name="folders" /></SideTab>
            <SideTab aria-label="收藏夹"><Icon name="favorites" /></SideTab>
          </SideTabs>
          <SideTools>
            {sideTools.map(([icon, label]) =>
              icon === "grip" ? <Grip key={icon} /> :
              icon === "rule" ? <Rule key={label} /> :
              icon === "space" ? <Spacer key={icon} /> : (
                <SideTool key={label} aria-label={label} $on={icon === "columns"}>
                  <Icon name={icon} />
                </SideTool>
              )
            )}
          </SideTools>
          <SearchRow onSubmit={(e) => e.preventDefault()}>
            <Icon name="funnel" />
            <SearchBox>
              <SearchInput type="text" aria-label="搜索" />
              <SmallButton type="button" aria-label="清除">
                <Svg width="8" height="8" viewBox="0 0 8 8"><path d="M0 0l8 8M8 0L0 8" stroke="#8f9496" strokeWidth="1.300" /></Svg>
              </SmallButton>
            </SearchBox>
            <SmallButton type="button" aria-label="搜索选项"><Caret $flush /></SmallButton>
            <SmallButton type="button" aria-label="添加"><Icon name="plus" /></SmallButton>
          </SearchRow>
          <TreeArea>
            <Tree>
              <thead>
                <tr>
                  <Head $w={192} />
                  <Head $w={104}>PTC_COMMON_</Head>
                  <Head $w={28} />
                </tr>
              </thead>
              <tbody>
                {nodes.map((n) => (
                  <tr key={n.text}>
                    <Cell>
                      <Node $root={n.root} $off={n.off}>
                        {!n.root && <Toggle disabled={!n.kids} aria-label="展开" />}
                        <Icon name={n.icon} />
                        {n.text}
                      </Node>
                    </Cell>
                    <Cell>{n.value}</Cell>
                    <Cell />
                  </tr>
                ))}
              </tbody>
            </Tree>
            <Insert />
          </TreeArea>
        </Side>
        <Canvas>
          <Notes>
            {notes.map((line, i) => (
              <Note key={i}>
                {line.map(([kind, text]) => (kind ? <Han key={text}>{text}</Han> : <span key={text}>{text}</span>))}
              </Note>
            ))}
          </Notes>
          <ViewTools>
            {viewTools.map(([icon, label]) => (
              <ViewTool key={icon} aria-label={label} $on={icon === "annotate"}>
                <Icon name={icon} />
              </ViewTool>
            ))}
          </ViewTools>
          <Lattice />
          <Logo>
            <LogoName>
              <LogoHot>野</LogoHot>
              <LogoHot>火</LogoHot>
              <span>论</span>
              <span>坛</span>
            </LogoName>
            <Flame width="20" height="44" viewBox="0 0 60 132" aria-hidden="true">
              <path d="M15 0C30 24 52 38 55 70c2 30-16 48-37 58L2 120C20 104 34 84 31 60 28 82 22 92 8 106 22 80 24 50 7 28 20 36 27 46 31 56 32 36 26 18 15 0z" fill="#ff6230" />
            </Flame>
            <LogoUrl>www.proewildfire.cn</LogoUrl>
          </Logo>
        </Canvas>
      </Work>
    </Page>
  );
}
